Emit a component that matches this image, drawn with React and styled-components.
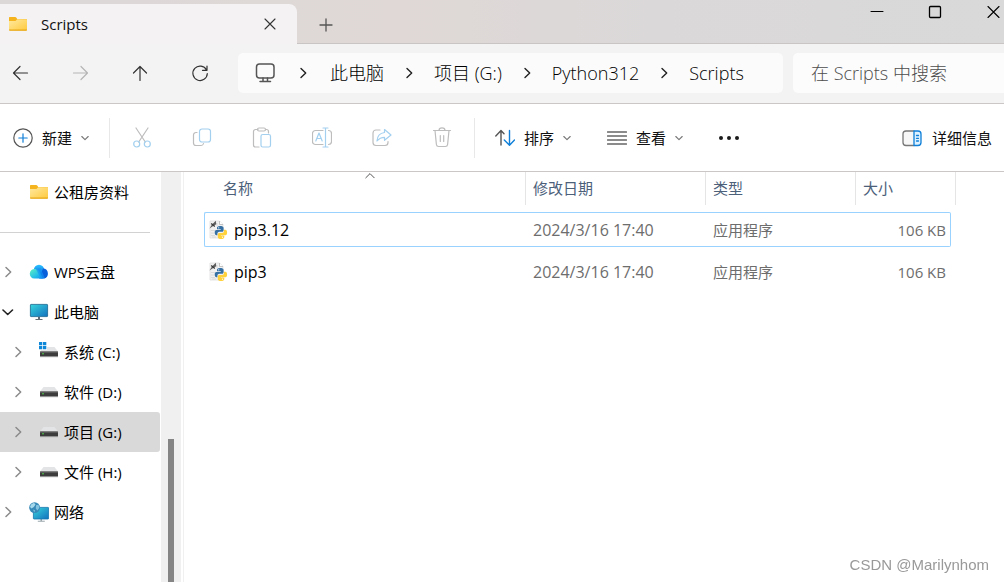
import React, { useState } from "react";
import styled, { createGlobalStyle } from "styled-components";

const GlobalStyle = createGlobalStyle`
  * {
    box-sizing: border-box;
  }

  body {
    margin: 0;
    background: #ffffff;
    color: #111111;
    font-family: "Open Sans", "Noto Sans CJK SC", sans-serif;
    font-size: 15px;
    line-height: 20px;
  }

  button, input {
    font: inherit;
    color: inherit;
  }

  svg {
    display: block;
    flex-shrink: 0;
  }
`;

const Window = styled.div`
  display: flex;
  flex-direction: column;
  height: 100vh;
  overflow: hidden;
`;

const TitleBar = styled.header`
  display: flex;
  height: 44px;
  flex-shrink: 0;
  background: linear-gradient(to right, #dcd8d8 0%, #dfd8d6 40%, #dbd8d9 65%, #d9d9d9 100%);
  box-shadow: inset 0 -1px #c9c5c5;
`;

const Tab = styled.div`
  display: flex;
  align-items: center;
  width: 297px;
  margin-top: 4px;
  padding: 0 17px 0 8px;
  gap: 13px;
  background: #f4f2f3;
  border-radius: 0 8px 0 0;
`;

const TabTitle = styled.span`
  flex: 1;
  font-weight: 500;
`;

const IconButton = styled.button`
  display: flex;
  align-items: center;
  justify-content: center;
  width: ${(props) => props.$width || 20}px;
  height: ${(props) => props.$height || 20}px;
  padding: 0;
  border: none;
  background: transparent;
  color: ${(props) => props.$color || "#333333"};
`;

const WindowButtons = styled.div`
  display: flex;
  margin-left: auto;
  margin-right: -18px;
`;

const NavBar = styled.nav`
  display: flex;
  align-items: center;
  height: 60px;
  padding-bottom: 1px;
  flex-shrink: 0;
  background: #f4f3f3;
  border-bottom: 1px solid #cbc7c7;
`;

const NavButtons = styled.div`
  display: flex;
  width: 238px;
  padding-left: 10px;
  gap: 40px;
`;

const Address = styled.ol`
  display: flex;
  align-items: center;
  flex: 1;
  min-width: 0;
  height: 40px;
  margin: 0 10px 0 0;
  padding: 0 16px;
  list-style: none;
  background: #fbfbfb;
  border-radius: 5px;
`;

const Crumb = styled.li`
  display: flex;
  align-items: center;
  white-space: nowrap;
`;

const CrumbLink = styled.a`
  color: #000000;
  font-size: 18px;
  font-weight: 300;
  line-height: 24px;
  text-decoration: none;
`;

const CrumbArrow = styled.span`
  display: flex;
  justify-content: center;
  width: ${(props) => props.$width || 50}px;
`;

const Search = styled.input`
  width: 211px;
  height: 40px;
  padding: 0 18px;
  border: none;
  border-radius: 5px 0 0 5px;
  background: #fcfcfc;
  font-size: 18px;
  font-weight: 300;

  &::placeholder {
    color: #4d4d4d;
    opacity: 1;
  }
`;

const Toolbar = styled.div`
  display: flex;
  align-items: center;
  height: 68px;
  flex-shrink: 0;
  border-bottom: 1px solid #cbc7c7;
`;

const ToolButton = styled.button`
  display: flex;
  align-items: center;
  gap: 9px;
  height: 40px;
  padding: 0 ${(props) => props.$pad || 20}px;
  border: none;
  background: transparent;
  white-space: nowrap;
`;

const NewButton = styled(ToolButton)`
  padding: 0 20px 0 13px;
`;

const DetailsButton = styled(ToolButton)`
  margin-left: auto;
  padding: 0 12px;
  gap: 10px;
`;

const Divider = styled.span`
  width: 1px;
  height: 40px;
  background: #e8e8e8;
`;

const Actions = styled.div`
  display: flex;
  padding: 0 2px;
`;

const Main = styled.main`
  display: flex;
  flex: 1;
  min-height: 0;
`;

const Sidebar = styled.aside`
  display: flex;
  width: 184px;
  flex-shrink: 0;
  border-right: 1px solid #f0f0f0;
`;

const Tree = styled.ul`
  width: 161px;
  margin: 0;
  padding: 0;
  list-style: none;
`;

const TreeItem = styled.li`
  display: flex;
  align-items: center;
  height: 40px;
  margin-right: 1px;
  padding-left: ${(props) => props.$level * 10}px;
  background: ${(props) => (props.$active ? "#d9d9d9" : "transparent")};
  border-radius: 0 3px 3px 0;
  white-space: nowrap;
  color: #000000;
`;

const TreeArrow = styled.span`
  width: 29px;
  padding-left: 2px;
`;

const TreeLabel = styled.span`
  margin-left: 5px;
`;

const TreeRule = styled.li`
  height: 40px;
  padding-top: 20px;

  &::after {
    content: "";
    display: block;
    width: 150px;
    height: 1px;
    background: #d2d2d2;
  }
`;

const ScrollTrack = styled.div`
  display: flex;
  align-items: flex-end;
  justify-content: center;
  width: 20px;
  background: #f0f0f0;
`;

const ScrollThumb = styled.div`
  width: 6px;
  height: 35%;
  background: #858585;
`;

const Content = styled.section`
  flex: 1;
  min-width: 0;
  padding-left: 20px;
`;

const Table = styled.table`
  width: 752px;
  margin-top: -7px;
  border-collapse: separate;
  border-spacing: 0 7px;
  table-layout: fixed;
`;

const Th = styled.th`
  position: relative;
  height: 33px;
  padding: 0 0 2px ${(props) => (props.$first ? 19 : 7)}px;
  border-right: 1px solid #e5e5e5;
  color: #4c607a;
  font-weight: 400;
  text-align: left;
`;

const SortMark = styled.span`
  position: absolute;
  top: 0;
  left: 10px;
  right: 0;
  display: flex;
  justify-content: center;
`;

const Td = styled.td`
  height: 35px;
  padding: 0 4px 0 7px;
  border: 0 solid transparent;
  border-width: 1px 0;
  color: #6d6d6d;
  font-size: ${(props) => (props.$large ? 16 : 15)}px;
  text-align: ${(props) => (props.$right ? "right" : "left")};
  white-space: nowrap;

  &:first-child {
    padding-left: 3px;
    border-left-width: 1px;
    border-radius: 2px 0 0 2px;
    color: #000000;
  }

  &:last-child {
    border-right-width: 1px;
    border-radius: 0 2px 2px 0;
  }
`;

const Row = styled.tr`
  ${Td} {
    border-color: ${(props) => (props.$focused ? "#99d1ff" : "transparent")};
  }
`;

const FileName = styled.div`
  display: flex;
  align-items: center;
  gap: 6px;
`;

const Watermark = styled.footer`
  position: fixed;
  right: 15px;
  bottom: 7px;
  color: #999999;
  font-family: "Liberation Sans", sans-serif;
  font-size: 15px;
`;

const Line = ({ w = 20, h = 20, color = "currentColor", width = 1.2, children }) => (
  <svg
    width={w}
    height={h}
    viewBox={`0 0 ${w} ${h}`}
    fill="none"
    stroke={color}
    strokeWidth={width}
    strokeLinecap="round"
    strokeLinejoin="round"
    aria-hidden="true"
  >
    {children}
  </svg>
);

const ChevronRight = ({ color = "#222222", width = 1.4 }) => (
  <Line w={12} h={14} color={color} width={width}>
    <path d="M4 2.5 8.7 7 4 11.5" />
  </Line>
);

const ChevronDown = () => (
  <Line w={8} h={8} color="#777777" width={1.1}>
    <path d="M.8 2.5 4 5.7 7.2 2.5" />
  </Line>
);

const FolderIcon = () => (
  <svg width="20" height="18" viewBox="0 0 20 18" aria-hidden="true">
    <defs>
      <linearGradient id="folder" x1="0" y1="0" x2="1" y2="1">
        <stop offset="0" stopColor="#ffe9a0" />
        <stop offset="1" stopColor="#ffca3d" />
      </linearGradient>
    </defs>
    <path d="M1 2.6Q1 2 1.8 2h5.4q.6 0 1 .6L9.2 4H18q1 0 1 1v4H1Z" fill="#f5b41d" />
    <path d="M1 6h6.5l1.8-1.7H18.2q.8 0 .8.8v9.6q0 .8-.8.8H1.8q-.8 0-.8-.8Z" fill="url(#folder)" />
    <path d="M1 14.5q0 1.2.8 1.2h16.4q.8 0 .8-1.2Z" fill="#e8a817" />
  </svg>
);

const CloudIcon = () => (
  <svg width="20" height="18" viewBox="0 0 20 18" aria-hidden="true">
    <defs>
      <linearGradient id="cloudLeft" x1="0" y1="0" x2="1" y2="1">
        <stop offset="0" stopColor="#5ff0c0" />
        <stop offset=".6" stopColor="#24bfe8" />
        <stop offset="1" stopColor="#118cf2" />
      </linearGradient>
      <linearGradient id="cloudTop" x1="0" y1="0" x2="0" y2="1">
        <stop offset="0" stopColor="#2bc1ff" />
        <stop offset="1" stopColor="#0869df" />
      </linearGradient>
    </defs>
    <circle cx="10" cy="7" r="5.2" fill="url(#cloudTop)" />
    <path d="M10 15.6 14 5.5a5.1 5.1 0 0 1 .8 10.1Z" fill="#095fda" />
    <path d="M6 6a5 5 0 0 1 4 2l4 7.6H5.2A4.8 4.8 0 0 1 6 6Z" fill="url(#cloudLeft)" />
    <path d="m7 6 4.5-1L16 15.6h-4.2Z" fill="#1290f3" opacity=".65" />
  </svg>
);

const ScreenDefs = () => (
  <defs>
    <linearGradient id="screen" x1="0" y1="0" x2="1" y2="1">
      <stop offset="0" stopColor="#38d5dd" />
      <stop offset="1" stopColor="#1270bd" />
    </linearGradient>
  </defs>
);

const ComputerIcon = () => (
  <svg width="20" height="18" viewBox="0 0 20 18" aria-hidden="true">
    <ScreenDefs />
    <path d="M9 14h2v2h2.5v1h-7v-1H9Z" fill="#626d75" />
    <rect x="1.4" y="1.4" width="17.2" height="12.2" rx=".6" fill="url(#screen)" stroke="#16658e" strokeWidth=".8" />
  </svg>
);

const DriveIcon = ({ system }) => (
  <svg width="20" height="20" viewBox="0 0 20 20" aria-hidden="true">
    <path d="M4.5 5h11L19 9.5v1H1v-1Z" fill="#e3e4e6" />
    <rect x="1" y="9.500" width="18" height="5.500" rx=".6" fill="#3c3c3c" />
    <path d="M1 9.500h18v1H1z" fill="#717171" />
    <path d="M1 14.200h18v1H1z" fill="#a8a8a8" />
    <circle cx="4" cy="11.800" r=".8" fill="#53e64b" />
    {system && (
      <>
        <path d="M0 0h8v8H0z" fill="#ffffff" />
        <path d="M0 0h3.300v3.300H0zM4 0h3.300v3.300H4zM0 4h3.300v3.300H0zM4 4h3.300v3.300H4z" fill="#0f87d8" />
      </>
    )}
  </svg>
);

const NetworkIcon = () => (
  <svg width="20" height="20" viewBox="0 0 20 20" aria-hidden="true">
    <ScreenDefs />
    <path d="M11.5 17h1.5v1.8h2.8v1h-7v-1h2.7Z" fill="#9ca8ae" />
    <rect x="4.4" y="5.4" width="15.2" height="11.6" rx=".6" fill="url(#screen)" stroke="#1476ad" strokeWidth=".8" />
    <circle cx="5.6" cy="5.6" r="5.4" fill="#3789b7" />
    <path d="M2 2.4 5 .8l1.5 1.6L4.8 5 2.6 6.4 1 5Z" fill="#a6d9ec" />
    <path d="m7 3.3 2.6-.5.8 3-2 2.7-1.6-2ZM4 7.6l2 .7-.7 2.2Z" fill="#81c2df" />
  </svg>
);

const PythonFileIcon = () => (
  <svg width="20" height="20" viewBox="0 0 20 20" aria-hidden="true">
    <path d="M2 1h9.500L15 4.500V18H2Z" fill="#f1f1f1" stroke="#dedede" strokeWidth=".8" />
    <path d="M11.500 1v3.500H15" fill="#ffffff" stroke="#b5b5b5" strokeWidth=".8" />
    <path d="M3 10.500h4M3 13h3M3 15.500h4M9 3v3M4 17h4" stroke="#d6d6d6" strokeWidth=".8" />
    <path d="m1.500 8.500 2.300-3.700L7.800.8l.5 3.400-3.100 1.700Z" fill="#5e5e5e" />
    <path d="m3.200 3.400 3.600 3" stroke="#3a3a3a" strokeWidth="1.300" />
    <path d="M12 6c-2.700 0-3 1.100-3 2v1.300h3.700v.6H8.400c-1.200 0-1.700 1-1.700 2.700s.8 2.700 1.700 2.700h1v-1.600c0-1 .8-1.900 1.900-1.900h2.800c.9 0 1.500-.7 1.500-1.500V8c0-1.500-1.500-2-3.600-2Z" fill="#3670a3" />
    <path d="M15.900 9.700v1.500c0 1.100-.8 1.900-1.800 1.900h-2.800c-.9 0-1.500.7-1.500 1.500v2.300c0 1.400 1.500 2 3.200 2 1.900 0 3.300-.6 3.300-2v-1.100h-3.400v-.6h4.500c1.200 0 1.700-1 1.700-2.700s-.6-2.800-1.800-2.800Z" fill="#ffd13b" />
    <circle cx="10.700" cy="7.800" r=".6" fill="#ffffff" />
    <circle cx="14.500" cy="17.200" r=".6" fill="#ffffff" />
  </svg>
);

const GREY = "#bdbdbd";
const BLUE = "#a3d0ef";

const actions = [
  {
    label: "剪切",
    icon: (
      <>
        <path d="M4 1 13.3 15M16 1 6.7 15" />
        <circle cx="4.7" cy="17" r="3" stroke={BLUE} />
        <circle cx="15.3" cy="17" r="3" stroke={BLUE} />
      </>
    ),
  },
  {
    label: "复制",
    icon: (
      <>
        <path d="M5 5.5H4a2.500 2.500 0 0 0-2.500 2.500v8A2.500 2.500 0 0 0 4 18.500h5a2.500 2.500 0 0 0 2.500-2" />
        <rect x="7.500" y="2" width="11" height="13" rx="2.500" stroke={BLUE} />
      </>
    ),
  },
  {
    label: "粘贴",
    icon: (
      <>
        <path d="M6 2.500H3.500a2 2 0 0 0-2 2V18a2 2 0 0 0 2 2H7M13.500 2.500h1a2 2 0 0 1 2 2V6" />
        <rect x="5.500" y="1" width="8" height="3" rx="1.500" />
        <rect x="9" y="7.500" width="9.500" height="12.500" rx="1.800" stroke={BLUE} />
      </>
    ),
  },
  {
    label: "重命名",
    icon: (
      <>
        <path d="M11 3.500H3.500a3 3 0 0 0-3 3v8a3 3 0 0 0 3 3H11M16.500 3.500a3 3 0 0 1 3 3v8a3 3 0 0 1-3 3" />
        <path d="M13.500 1v19M11 1h5M11 20h5M3.800 14 7 6l3.200 8M5 11.500h4" stroke={BLUE} />
      </>
    ),
  },
  {
    label: "共享",
    icon: (
      <>
        <path d="M8 3H4a3 3 0 0 0-3 3v9.500a3 3 0 0 0 3 3h9a3 3 0 0 0 3-3v-1" />
        <path d="M12.500 2.500 19 8l-6.500 5.300v-3C9 10.300 7 11.500 5 14c.3-5 3-8 7.500-8.500Z" stroke={BLUE} />
      </>
    ),
  },
  {
    label: "删除",
    icon: (
      <>
        <path d="M1.500 3.500h17M7 3.500a3 2.600 0 0 1 6 0M3 3.500l1.400 14q.2 2 2.200 2h6.800q2 0 2.200-2L17 3.500M8.300 8.500v6M11.700 8.500v6" />
      </>
    ),
  },
];

const crumbs = ["此电脑", "项目 (G:)", "Python312", "Scripts"];

const places = [
  { label: "WPS云盘", level: 0, icon: <CloudIcon /> },
  { label: "此电脑", level: 0, open: true, icon: <ComputerIcon /> },
  { label: "系统 (C:)", level: 1, icon: <DriveIcon system /> },
  { label: "软件 (D:)", level: 1, icon: <DriveIcon /> },
  { label: "项目 (G:)", level: 1, icon: <DriveIcon /> },
  { label: "文件 (H:)", level: 1, icon: <DriveIcon /> },
  { label: "网络", level: 0, icon: <NetworkIcon /> },
];

const files = [
  { name: "pip3.12", date: "2024/3/16 17:40", type: "应用程序", size: "106 KB" },
  { name: "pip3", date: "2024/3/16 17:40", type: "应用程序", size: "106 KB" },
];

const App = () => {
  const [place, setPlace] = useState("项目 (G:)");
  const [focused, setFocused] = useState("pip3.12");

  return (
    <Window>
      <GlobalStyle />
      <TitleBar>
        <Tab>
          <FolderIcon />
          <TabTitle>Scripts</TabTitle>
          <IconButton aria-label="关闭标签页">
            <Line width={1.1}>
              <path d="m5 5 10 10m0-10-10 10" />
            </Line>
          </IconButton>
        </Tab>
        <IconButton aria-label="新建标签页" $width={58} $height={50} $color="#555555">
          <Line width={1.3}>
            <path d="M10 4v12M4 10h12" />
          </Line>
        </IconButton>
        <WindowButtons>
          <IconButton aria-label="最小化" $width={58} $height={24} $color="#000000">
            <Line width={1}>
              <path d="M4 9.500h12" />
            </Line>
          </IconButton>
          <IconButton aria-label="最大化" $width={58} $height={24} $color="#000000">
            <Line width={1.3}>
              <rect x="4.500" y="4.500" width="11" height="11" rx="1" />
            </Line>
          </IconButton>
          <IconButton aria-label="关闭" $width={58} $height={24} $color="#000000">
            <Line width={1.1}>
              <path d="m5 4.500 11 11m0-11-11 11" />
            </Line>
          </IconButton>
        </WindowButtons>
      </TitleBar>

      <NavBar>
        <NavButtons>
          <IconButton aria-label="后退">
            <Line>
              <path d="M17.500 10h-14M10 3.500 3.500 10l6.500 6.500" />
            </Line>
          </IconButton>
          <IconButton aria-label="前进" $color="#b5b5b5">
            <Line>
              <path d="M3.500 10h14M11 3.500l6.500 6.500-6.500 6.500" />
            </Line>
          </IconButton>
          <IconButton aria-label="向上">
            <Line>
              <path d="M10 17.500v-14M3.500 10 10 3.500l6.500 6.500" />
            </Line>
          </IconButton>
          <IconButton aria-label="刷新">
            <Line>
              <path d="M16.500 7A7.200 7.200 0 1 0 17.300 10.500M17 3v4.300h-4.500" />
            </Line>
          </IconButton>
        </NavButtons>
        <Address>
          <Crumb>
            <Line w={22} h={22} color="#555555" width={1.5}>
              <rect x="2.500" y="2" width="17.500" height="14" rx="3" />
              <path d="M9 16v3M13.500 16v3M6 19.500h10.500" />
            </Line>
          </Crumb>
          {crumbs.map((crumb, index) => (
            <Crumb key={crumb}>
              <CrumbArrow $width={index === 0 ? 54 : 50}>
                <ChevronRight />
              </CrumbArrow>
              <CrumbLink href="#">{crumb}</CrumbLink>
            </Crumb>
          ))}
        </Address>
        <Search type="search" aria-label="搜索" placeholder="在 Scripts 中搜索" />
      </NavBar>

      <Toolbar>
        <NewButton>
          <Line color="#555555">
            <circle cx="10" cy="10" r="9.200" />
            <path d="M10 5.800v8.400M5.800 10h8.400" stroke="#0f7fd8" />
          </Line>
          新建
          <ChevronDown />
        </NewButton>
        <Divider />
        <Actions>
          {actions.map((action) => (
            <IconButton key={action.label} aria-label={action.label} $width={60} $height={40} disabled>
              <Line h={21} color={GREY}>
                {action.icon}
              </Line>
            </IconButton>
          ))}
        </Actions>
        <Divider />
        <ToolButton>
          <Line color="#555555" width={1.4}>
            <path d="M6 17V3M.8 8 6 2.600 9 5.700" />
            <path d="M14.500 2.500V17M9.300 12l5.200 5.200 5-5.200" stroke="#0f7fd8" />
          </Line>
          排序
          <ChevronDown />
        </ToolButton>
        <ToolButton $pad={16}>
          <Line color="#666666" width={1.3}>
            <path d="M.5 4h19M.5 8h19M.5 12h19M.5 16h19" />
          </Line>
          查看
          <ChevronDown />
        </ToolButton>
        <ToolButton aria-label="更多">
          <svg width="20" height="20" viewBox="0 0 20 20" fill="#1b1b1b" aria-hidden="true">
            <circle cx="2" cy="10" r="2" />
            <circle cx="10" cy="10" r="2" />
            <circle cx="18" cy="10" r="2" />
          </svg>
        </ToolButton>
        <DetailsButton>
          <Line color="#777777" width={1.3}>
            <path d="M12 3H4a3 3 0 0 0-3 3v8.500a3 3 0 0 0 3 3h8" fill="#f7f7f7" />
            <path d="M12 3h4a3 3 0 0 1 3 3v8.500a3 3 0 0 1-3 3h-4Z" fill="#ddf1ff" stroke="#0f7fd8" />
            <path d="M14.500 7.500h2M14.500 10.300h2M14.500 13h2" stroke="#0f7fd8" />
          </Line>
          详细信息
        </DetailsButton>
      </Toolbar>

      <Main>
        <Sidebar>
          <Tree>
            <TreeItem $level={0}>
              <TreeArrow />
              <FolderIcon />
              <TreeLabel>公租房资料</TreeLabel>
            </TreeItem>
            <TreeRule />
            {places.map((item) => (
              <TreeItem
                key={item.label}
                $level={item.level}
                $active={item.label === place}
                onClick={() => setPlace(item.label)}
              >
                <TreeArrow>
                  {item.open ? (
                    <Line w={12} h={14} color="#222222" width={1.6}>
                      <path d="M1 5 5.700 9.500 10.500 5" />
                    </Line>
                  ) : (
                    <ChevronRight color="#8a8a8a" width={1.5} />
                  )}
                </TreeArrow>
                {item.icon}
                <TreeLabel>{item.label}</TreeLabel>
              </TreeItem>
            ))}
          </Tree>
          <ScrollTrack>
            <ScrollThumb />
          </ScrollTrack>
        </Sidebar>

        <Content>
          <Table>
            <colgroup>
              <col width="322" />
              <col width="180" />
              <col width="150" />
              <col width="95" />
              <col width="5" />
            </colgroup>
            <thead>
              <tr>
                <Th $first>
                  名称
                  <SortMark>
                    <Line w={10} h={8} color="#555555" width={1}>
                      <path d="M.8 5.800 5 1.600l4.200 4.200" />
                    </Line>
                  </SortMark>
                </Th>
                <Th>修改日期</Th>
                <Th>类型</Th>
                <Th colSpan={2}>大小</Th>
              </tr>
            </thead>
            <tbody>
              {files.map((file) => (
                <Row key={file.name} $focused={file.name === focused} onClick={() => setFocused(file.name)}>
                  <Td $large>
                    <FileName>
                      <PythonFileIcon />
                      {file.name}
                    </FileName>
                  </Td>
                  <Td $large>{file.date}</Td>
                  <Td>{file.type}</Td>
                  <Td $right>{file.size}</Td>
                </Row>
              ))}
            </tbody>
          </Table>
        </Content>
      </Main>
      <Watermark>CSDN @Marilynhom</Watermark>
    </Window>
  );
};

export default App;
